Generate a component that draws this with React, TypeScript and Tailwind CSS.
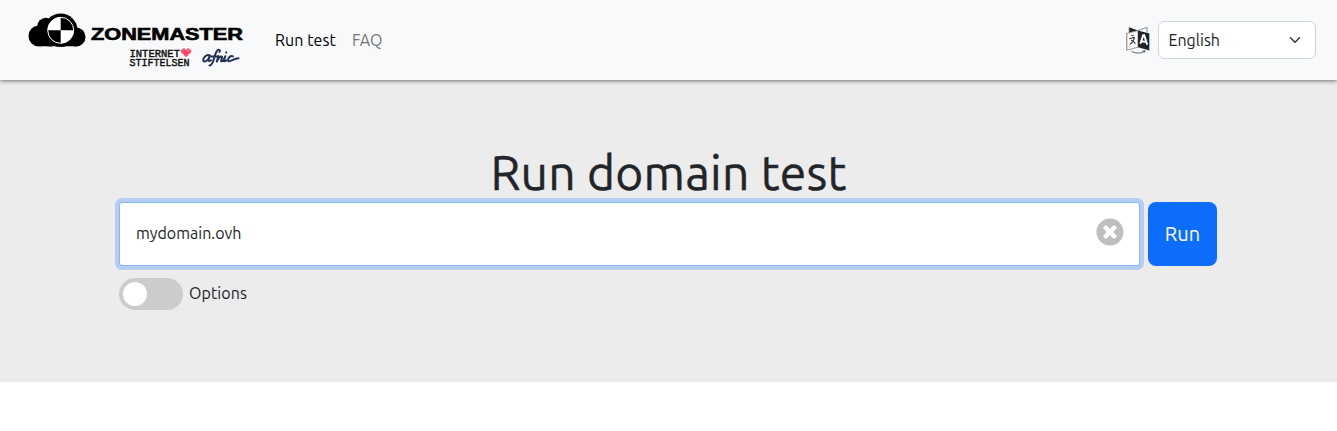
import { useState } from "react";
import { FaTimesCircle } from "react-icons/fa";

function Logo() {
  return (
    <svg width="216" height="58" viewBox="28 11 216 58" role="img" aria-label="Zonemaster">
      <g fill="#000">
        <circle cx="39" cy="36" r="10.5" />
        <circle cx="46" cy="26.5" r="8.8" />
        <circle cx="50" cy="37" r="9.5" />
        <circle cx="76" cy="37" r="9.5" />
        <path d="M40 38h37v8.2H40z" />
        <circle cx="60.7" cy="30.3" r="16.8" />
      </g>
      <circle cx="60.7" cy="30.3" r="13" fill="#000" stroke="#fff" strokeWidth="1" />
      <path d="M60.7 30.3V17.3A13 13 0 0 0 47.7 30.3zM60.7 30.3V43.3A13 13 0 0 0 73.7 30.3z" fill="#fff" />
      <text x="91" y="40.4" textLength="152" lengthAdjust="spacingAndGlyphs" fontSize="15.6" fontWeight="700" fontFamily="Liberation Sans, Arial, sans-serif" fill="#000" stroke="#000" strokeWidth=".6">ZONEMASTER</text>
      <g fontFamily="Liberation Mono, monospace" fontSize="11" fill="#111" stroke="#111" strokeWidth=".45">
        <text x="129.5" y="56.7" textLength="50.5" lengthAdjust="spacingAndGlyphs">INTERNET</text>
        <text x="129.5" y="66.2" textLength="60" lengthAdjust="spacingAndGlyphs">STIFTELSEN</text>
      </g>
      <path d="M182.5 48.5h2.5v1h2v-1h2.5v1.2h1.7v3h-1.5v1.5h-1.5v1.5h-1.3v1.3h-1.5v-1.3H184v-1.5h-1.5v-1.5H181v-3h1.5z" fill="#ff4669" />
      <path d="M187.5 50h1.4v1.4h-1.4z" fill="#ffb0bf" />
      <g fill="none" stroke="#23305a" strokeWidth="2" strokeLinecap="round" strokeLinejoin="round">
        <path d="M209.2 55.3c-3-1.1-6 2.8-6 4.8 0 2.6 3.7 1.2 5.2-1.1l1.5-3.5-1.5 4.3c-.2 1.8 1.5 1.3 2.5.5" />
        <path d="M209.5 65.5c2.5 0 3.5-3 4.7-7.5 1.2-4.7 2.3-8.3 4.5-8.3 1.5 0 1.4 1.5.8 2.3M211 56.4h6.8" />
        <path d="m218.5 56-1.7 5.5c1.4-2.9 3.2-5 4.6-5 1.7 0-.2 3-.3 4.2 0 1.2 1.7.5 2.4-.2l1.8-4.3-1.4 4.2c-.1 1.3 1.6.8 2.5-.1M233 56.4c-2.4-1.2-4.9 1.4-4.9 3.4 0 4 5.2-1.3 10.4-1.5" />
        <path d="m226.2 52.5.1-.2" />
      </g>
    </svg>
  );
}

function TranslateIcon() {
  return (
    <svg width="24" height="28" viewBox="0 0 24 28" aria-hidden="true">
      <path d="M3 1.2 12 4.6 3 6.8z" fill="#212529" />
      <path d="m12 4.6 9-3.3v5.4" fill="none" stroke="#7a8289" strokeWidth=".9" />
      <path d="M.8 7.5 12 4.6v16.6L.8 24.2z" fill="#fafbfc" stroke="#777d82" strokeWidth=".8" />
      <path d="M.6 7.5v16.7M3 1.2v5.6" stroke="#c9835f" strokeWidth=".8" />
      <path d="M12 4.6 23.4 7.5v17L12 21.2z" fill="#212529" />
      <path d="M23.6 7.5v17M21 1.3v5.4" stroke="#83c8ef" strokeWidth=".7" />
      <path d="m5.3 9.3 2.3.8M3.3 12.8l5-1.4c-.5 3-2 5.3-4.5 7M5 14.2c1.3.2 3.3 1.5 4.5 3.6" fill="none" stroke="#30363b" strokeWidth="1.1" />
      <path d="m14.4 17.8 2.8-8.6h1l3 9.6m-6-3.6 5 .8" fill="none" stroke="#fff" strokeWidth="2" />
      <path d="M5.5 25.2c3.5 2.4 9 2.4 13 .2m-2.1-.2 2.5-.5-.6 2" fill="none" stroke="#444a4f" strokeWidth=".9" />
    </svg>
  );
}

export default function App() {
  const [domain, setDomain] = useState("mydomain.ovh");
  const [options, setOptions] = useState(false);
  return (
    <div className="min-h-[431px] bg-white font-['Ubuntu','Noto_Sans',sans-serif] text-base leading-6 text-[#212529]">
      <header className="relative flex h-20 items-center bg-[#f8f9fa] pr-[21px] pl-7 shadow-[0_0_5px_0_rgba(0,0,0,0.75)]">
        <a href="#" className="block"><Logo /></a>
        <nav className="ml-[31px] flex gap-4">
          <a href="#" className="w-[61px] whitespace-nowrap tracking-[0.08px] text-black">Run test</a>
          <a href="#" className="whitespace-nowrap text-[#747576]">FAQ</a>
        </nav>
        <div className="ml-auto flex items-center gap-2">
          <TranslateIcon />
          <button className="flex h-[38px] w-[158px] items-center justify-between rounded-md border border-[#ced4da] bg-white pr-[14px] pl-[9.5px]">
            <span>English</span>
            <svg width="12" height="12" viewBox="0 0 16 16" fill="none" stroke="#343a40" strokeWidth="2" strokeLinecap="round" strokeLinejoin="round" aria-hidden="true"><path d="m2 5 6 6 6-6" /></svg>
          </button>
        </div>
      </header>
      <main className="h-[302px] bg-[#ececec] px-[119px] pt-[64px]">
        <h1 className="h-[58px] text-center text-[48px] leading-[56px] font-[440] tracking-[0.2px] whitespace-nowrap [-webkit-text-stroke:0.4px_#212529]">Run domain test</h1>
        <form className="flex w-[1098px] gap-2" onSubmit={(e) => e.preventDefault()}>
          <div className="flex h-16 w-[1021px] items-center rounded-[3px] border border-[#86b7fe] bg-white pr-[15px] pl-4 shadow-[0_0_0_4px_#b4cdf1]">
            <input aria-label="Domain name" className="mb-[3px] flex-1 outline-none" value={domain} onChange={(e) => setDomain(e.target.value)} />
            <button type="button" aria-label="Clear" className="mb-[3.4px]" onClick={() => setDomain("")}><FaTimesCircle size={28} color="#bfbfbf" /></button>
          </div>
          <button className="h-16 w-[69px] rounded-lg bg-[#0d6efd] text-[20px] text-white">Run</button>
        </form>
        <div className="mt-3 flex items-center gap-[6px]">
          <button role="switch" aria-label="Options" aria-checked={options} onClick={() => setOptions(!options)} className="flex h-8 w-16 items-center rounded-full bg-[#cccccc] px-1">
            <span className={options ? "ml-auto size-6 rounded-full bg-white" : "size-6 rounded-full bg-white"} />
          </button>
          <span className="mb-0.5 tracking-[0.1px]">Options</span>
        </div>
      </main>
    </div>
  );
}
